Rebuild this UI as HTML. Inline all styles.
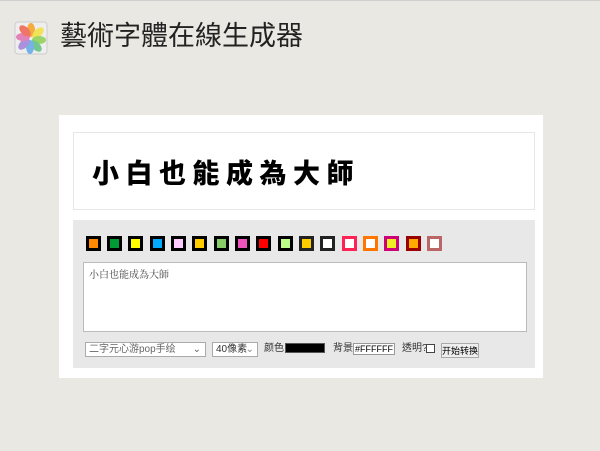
<!DOCTYPE html>
<html><head><meta charset="utf-8"><style>
*{margin:0;padding:0;box-sizing:border-box}
body{width:600px;height:451px;background:#e9e8e3;position:relative;overflow:hidden;font-family:"Liberation Sans","Noto Sans CJK TC",sans-serif;border-top:1px solid #cfcfcf}
.abs{position:absolute;white-space:nowrap}
.h1{left:60px;top:17px;font-size:27px;color:#222;line-height:36px}
.panel{left:59px;top:114px;width:484px;height:263px;background:#fff}
.tbox{left:73px;top:131px;width:462px;height:78px;border:1px solid #e6e6e6;background:#fff}
.tt{left:92px;top:151px;font-size:27px;letter-spacing:6.5px;color:#000;line-height:40px;font-family:"Noto Sans CJK TC",sans-serif;font-weight:900}
.gray{left:73px;top:219px;width:462px;height:148px;background:#e8e8e8}
.sw{position:absolute;top:235px;width:15px;height:15px;border:3px solid #000}
.ta{left:83px;top:261px;width:444px;height:70px;background:#fff;border:1px solid #bbb;font-size:10px;color:#444;padding:3px 5px;font-family:"Noto Serif CJK SC",serif}
.ctl{font-size:10px;color:#333;top:341px;line-height:14px}
.sel{border:1px solid #aaa;background:#fff;height:15px;color:#666;overflow:hidden}
</style></head><body>
<svg class="abs" style="left:14px;top:20px" width="34" height="34" viewBox="0 0 34 34">
<rect x="1" y="1" width="32" height="32" rx="3" fill="#eee" stroke="#ccc"/>
<g opacity="0.85">
<ellipse cx="17" cy="9" rx="4" ry="7" fill="#f7a020"/>
<ellipse cx="24" cy="12" rx="4" ry="7" fill="#f1e040" transform="rotate(45 24 12)"/>
<ellipse cx="25" cy="19" rx="7" ry="4" fill="#8fd050"/>
<ellipse cx="22" cy="25" rx="4" ry="7" fill="#60c080" transform="rotate(-45 22 25)"/>
<ellipse cx="16" cy="26" rx="4" ry="7" fill="#60a8e8"/>
<ellipse cx="10" cy="23" rx="4" ry="7" fill="#a080d8" transform="rotate(45 10 23)"/>
<ellipse cx="9" cy="16" rx="7" ry="4" fill="#e070b0"/>
<ellipse cx="11" cy="10" rx="4" ry="7" fill="#f06050" transform="rotate(-45 11 10)"/>
</g></svg>
<div class="abs h1">藝術字體在線生成器</div>
<div class="abs panel"></div>
<div class="abs tbox"></div>
<div class="abs tt">小白也能成為大師</div>
<div class="abs gray"></div>
<div class="sw" style="left:86px;border-color:#000;background:#f80"></div>
<div class="sw" style="left:107px;border-color:#000;background:#093"></div>
<div class="sw" style="left:128px;border-color:#000;background:#ff0"></div>
<div class="sw" style="left:150px;border-color:#000;background:#0af"></div>
<div class="sw" style="left:171px;border-color:#000;background:#fcf"></div>
<div class="sw" style="left:192px;border-color:#000;background:#fc0"></div>
<div class="sw" style="left:214px;border-color:#000;background:#8c6"></div>
<div class="sw" style="left:235px;border-color:#000;background:#e5b"></div>
<div class="sw" style="left:256px;border-color:#000;background:#f00"></div>
<div class="sw" style="left:278px;border-color:#000;background:#bf8"></div>
<div class="sw" style="left:299px;border-color:#222;background:#fc0"></div>
<div class="sw" style="left:320px;border-color:#222;background:#fff"></div>
<div class="sw" style="left:342px;border-color:#f25;background:#fff"></div>
<div class="sw" style="left:363px;border-color:#f70;background:#fff"></div>
<div class="sw" style="left:384px;border-color:#c07;background:#ee2"></div>
<div class="sw" style="left:406px;border-color:#900;background:#fa0"></div>
<div class="sw" style="left:427px;border-color:#b66;background:#fff"></div>
<div class="abs ta">小白也能成為大師</div>
<div class="abs ctl sel" style="left:85px;width:121px;padding-left:3px">二字元心游pop手绘<span style="position:absolute;right:4px;top:0">⌄</span></div>
<div class="abs ctl sel" style="left:212px;width:46px;padding-left:3px;color:#333">40像素<span style="position:absolute;right:3px;top:0;color:#888">⌄</span></div>
<div class="abs ctl" style="left:264px">颜色</div>
<div class="abs" style="left:285px;top:342px;width:40px;height:10px;background:#000;border:1px solid #555"></div>
<div class="abs ctl" style="left:333px">背景</div>
<div class="abs ctl" style="left:353px;top:342px;width:42px;height:12px;background:#fff;border:1px solid #999;font-size:9px;line-height:10px;padding-left:1px;color:#000;overflow:hidden">#FFFFFF</div>
<div class="abs ctl" style="left:402px">透明?</div>
<div class="abs" style="left:426px;top:343px;width:9px;height:9px;border:1px solid #444;background:#fff"></div>
<div class="abs ctl" style="left:441px;top:342px;width:38px;height:15px;border:1px solid #aaa;background:#eee;text-align:center;color:#000;font-size:9px">开始转换</div>
</body></html>
